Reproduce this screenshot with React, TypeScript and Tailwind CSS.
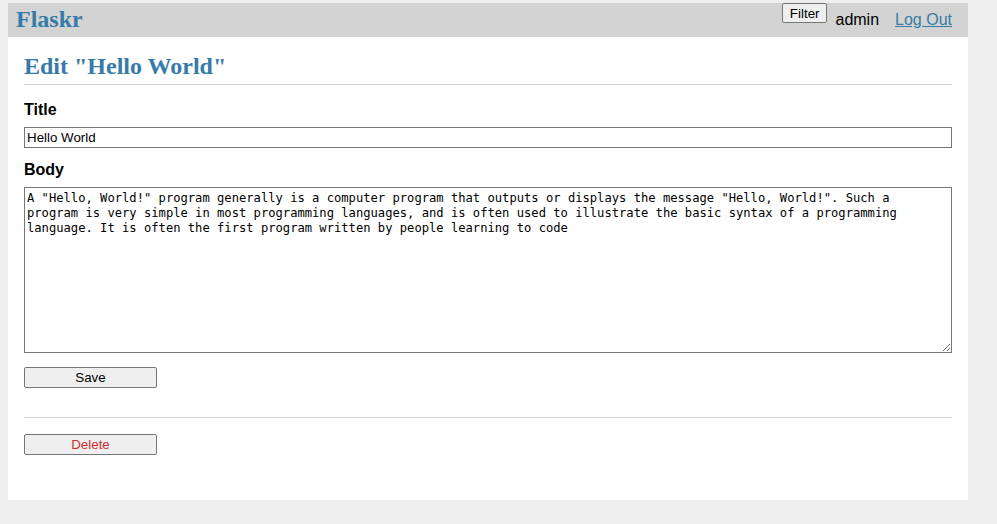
const body =
  'A "Hello, World!" program generally is a computer program that outputs or displays the message "Hello, World!". Such a program is very simple in most programming languages, and is often used to illustrate the basic syntax of a programming language. It is often the first program written by people learning to code';

const btn =
  "bg-[#efefef] border border-[#767676] rounded-[2px] text-[13.33px] leading-[15px] font-['Liberation_Sans',Arial,sans-serif]";

export default function App() {
  return (
    <div className="min-h-screen bg-[#eeeeee] pl-2 pt-[3px] font-['Liberation_Sans',Arial,sans-serif] text-black">
      <div className="w-[960px] bg-white pb-[44px]">
        <nav className="flex h-[34px] items-center bg-[#d3d3d3] px-2">
          <h1 className="flex-1 font-['Liberation_Serif','Times_New_Roman',serif] text-[24px] leading-[27.6px] font-bold text-[#377ba8]">
            Flaskr
          </h1>
          <ul className="flex self-stretch">
            <li className="flex items-start">
              <button className={`${btn} block h-5 px-[7px]`}>Filter</button>
            </li>
            <li>
              <span className="block p-2 text-base leading-[18.4px]">admin</span>
            </li>
            <li>
              <a href="#" className="block p-2 text-base leading-[18.4px] text-[#377ba8] underline">
                Log Out
              </a>
            </li>
          </ul>
        </nav>

        <section className="px-4">
          <header className="flex items-end border-b border-[#d3d3d3]">
            <h1 className="mt-4 mb-[3px] flex-1 font-['Liberation_Serif','Times_New_Roman',serif] text-[24px] leading-[27.6px] font-bold text-[#377ba8]">
              Edit "Hello World"
            </h1>
          </header>

          <form className="mt-4 flex flex-col">
            <label className="mb-2 text-base leading-[18.4px] font-bold">Title</label>
            <input
              defaultValue="Hello World"
              className="mb-[13px] h-[21px] border border-[#767676] px-[2px] text-[13.33px] leading-[15px] outline-none"
            />
            <label className="mb-2 text-base leading-[18.4px] font-bold">Body</label>
            <textarea
              defaultValue={body}
              className="mb-[14px] h-[166px] resize border border-[#767676] pt-[3px] pl-[2px] pr-[6px] font-['DejaVu_Sans_Mono',monospace] text-[12.15px] leading-[15px] outline-none"
            />
            <button type="button" className={`${btn} h-[21px] w-[133px] self-start`}>
              Save
            </button>
          </form>

          <hr className="mt-[29px] border-0 border-t border-[#d3d3d3]" />

          <div className="mt-[14px]">
            <button type="button" className={`${btn} h-[21px] w-[133px] text-[#cc2f2e]`}>
              Delete
            </button>
          </div>
        </section>
      </div>
    </div>
  );
}
